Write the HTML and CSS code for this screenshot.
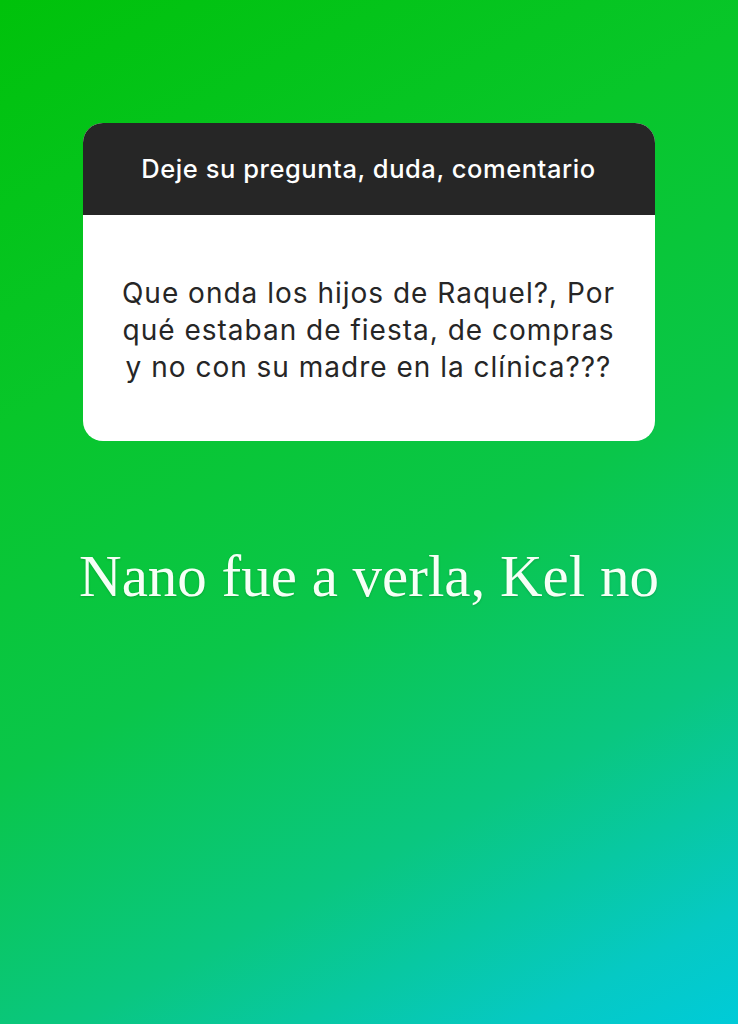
FILE: index.html
```html
<!DOCTYPE html>
<html lang="es">
<head>
<meta charset="utf-8">
<link rel="stylesheet" href="styles.css">
</head>
<body>
<main class="story">
  <section class="card">
    <header class="card-head">Deje su pregunta, duda, comentario</header>
    <div class="card-body">
      <p>Que onda los hijos de Raquel?, Por<br>qué estaban de fiesta, de compras<br>y no con su madre en la clínica???</p>
    </div>
  </section>
  <h1 class="answer">Nano fue a verla, Kel no</h1>
</main>
</body>
</html>
```
FILE: styles.css
```css
html, body {
  margin: 0;
  padding: 0;
}
body {
  width: 738px;
  height: 1024px;
  overflow: hidden;
}
.story {
  width: 738px;
  height: 1024px;
  box-sizing: border-box;
  padding-top: 123px;
  display: flex;
  flex-direction: column;
  align-items: center;
  background: linear-gradient(152deg, #00c20a 0%, #08c62a 30%, #0ac64a 55%, #0ac780 75%, #06c9c4 92%, #00cbd8 100%);
}
.card {
  width: 572px;
  border-radius: 20px;
  overflow: hidden;
  background: #fff;
  margin-left: -1px;
}
.card-head {
  height: 92px;
  background: #262626;
  color: #fff;
  display: flex;
  align-items: center;
  justify-content: center;
  font-family: Inter, "Liberation Sans", sans-serif;
  font-weight: 500;
  font-size: 25.5px;
  letter-spacing: 0.55px;
  padding-bottom: 2px;
  box-sizing: border-box;
}
.card-body {
  height: 226px;
  display: flex;
  align-items: center;
  justify-content: center;
  box-sizing: border-box;
}
.card-body p {
  margin: 0;
  text-align: center;
  font-family: Inter, "Liberation Sans", sans-serif;
  font-size: 28px;
  letter-spacing: 1px;
  line-height: 37px;
  color: #262626;
  padding-top: 4px;
  white-space: nowrap;
}
.answer {
  margin: 106px 0 0;
  font-family: "Liberation Serif", serif;
  font-weight: 400;
  font-size: 59px;
  color: #f6fff6;
  line-height: 1;
  text-shadow: 0 1px 2px rgba(0, 80, 20, 0.25);
}
```
